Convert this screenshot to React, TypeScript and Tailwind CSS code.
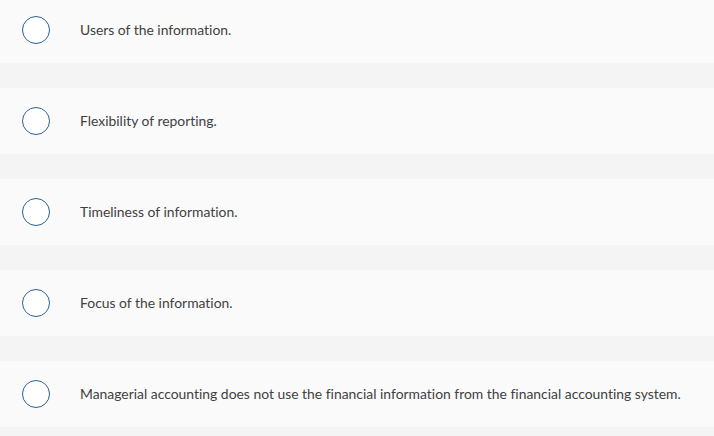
const options = [
  'Users of the information.',
  'Flexibility of reporting.',
  'Timeliness of information.',
  'Focus of the information.',
  'Managerial accounting does not use the financial information from the financial accounting system.',
];

const Radio = () => (
  <div className="w-[28px] h-[28px] rounded-full border-[1.5px] border-[#2c5f94] bg-white shrink-0" />
);

export default function App() {
  return (
    <div className="w-[714px] h-[436px] overflow-hidden bg-[#f4f4f4]">
      <div className="-mt-[3px] flex flex-col gap-[25px]">
        {options.map((text) => (
          <div key={text} className="h-[66px] bg-[#fafafa] flex items-center pl-[22px]">
            <Radio />
            <span
              className="ml-[30px] mt-[1px] text-[13.9px] text-[#414141] [font-variant-ligatures:none]"
              style={{ fontFamily: 'Lato, "Open Sans", sans-serif' }}
            >
              {text}
            </span>
          </div>
        ))}
      </div>
    </div>
  );
}
